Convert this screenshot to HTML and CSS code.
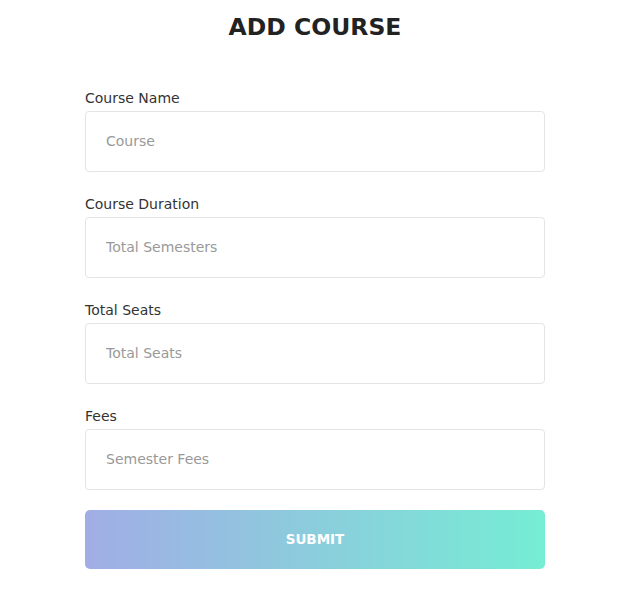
FILE: index.html
```html
<!DOCTYPE html>
<html>
<head>
<meta charset="utf-8">
<link rel="stylesheet" href="styles.css">
</head>
<body>
<div class="page">
  <h1 class="title">ADD COURSE</h1>
  <form class="form">
    <div class="field">
      <label class="label">Course Name</label>
      <input class="input" type="text" placeholder="Course">
    </div>
    <div class="field">
      <label class="label">Course Duration</label>
      <input class="input" type="text" placeholder="Total Semesters">
    </div>
    <div class="field">
      <label class="label">Total Seats</label>
      <input class="input" type="text" placeholder="Total Seats">
    </div>
    <div class="field">
      <label class="label">Fees</label>
      <input class="input" type="text" placeholder="Semester Fees">
    </div>
    <button class="submit" type="button">SUBMIT</button>
  </form>
</div>
</body>
</html>
```
FILE: styles.css
```css
html, body {
  margin: 0;
  padding: 0;
  background: #ffffff;
}
body {
  font-family: "DejaVu Sans", "Noto Sans", sans-serif;
  color: #222222;
}
.page {
  width: 460px;
  margin: 0 auto;
  padding-left: 10px;
}
.title {
  margin: 0;
  padding-top: 12px;
  font-size: 23.5px;
  line-height: 30px;
  font-weight: 700;
  text-align: center;
  color: #222222;
}
.form {
  display: flex;
  flex-direction: column;
  margin-top: 46px;
}
.field {
  display: flex;
  flex-direction: column;
  margin-bottom: 22px;
}
.label {
  font-size: 14px;
  line-height: 20px;
  color: #333333;
  margin-bottom: 3px;
}
.input {
  box-sizing: border-box;
  height: 61px;
  width: 100%;
  border: 1px solid #e4e4e4;
  border-radius: 4px;
  padding: 0 20px 2px;
  font-family: inherit;
  font-size: 14px;
  color: #333;
  outline: none;
}
.input::placeholder {
  color: #999999;
}
.submit {
  margin-top: -2px;
  height: 59px;
  width: 100%;
  border: none;
  border-radius: 5px;
  padding: 0 0 2px;
  background: linear-gradient(to right, #a1ade5, #75edd4);
  color: #ffffff;
  font-family: inherit;
  font-size: 13.5px;
  font-weight: 700;
}
```
